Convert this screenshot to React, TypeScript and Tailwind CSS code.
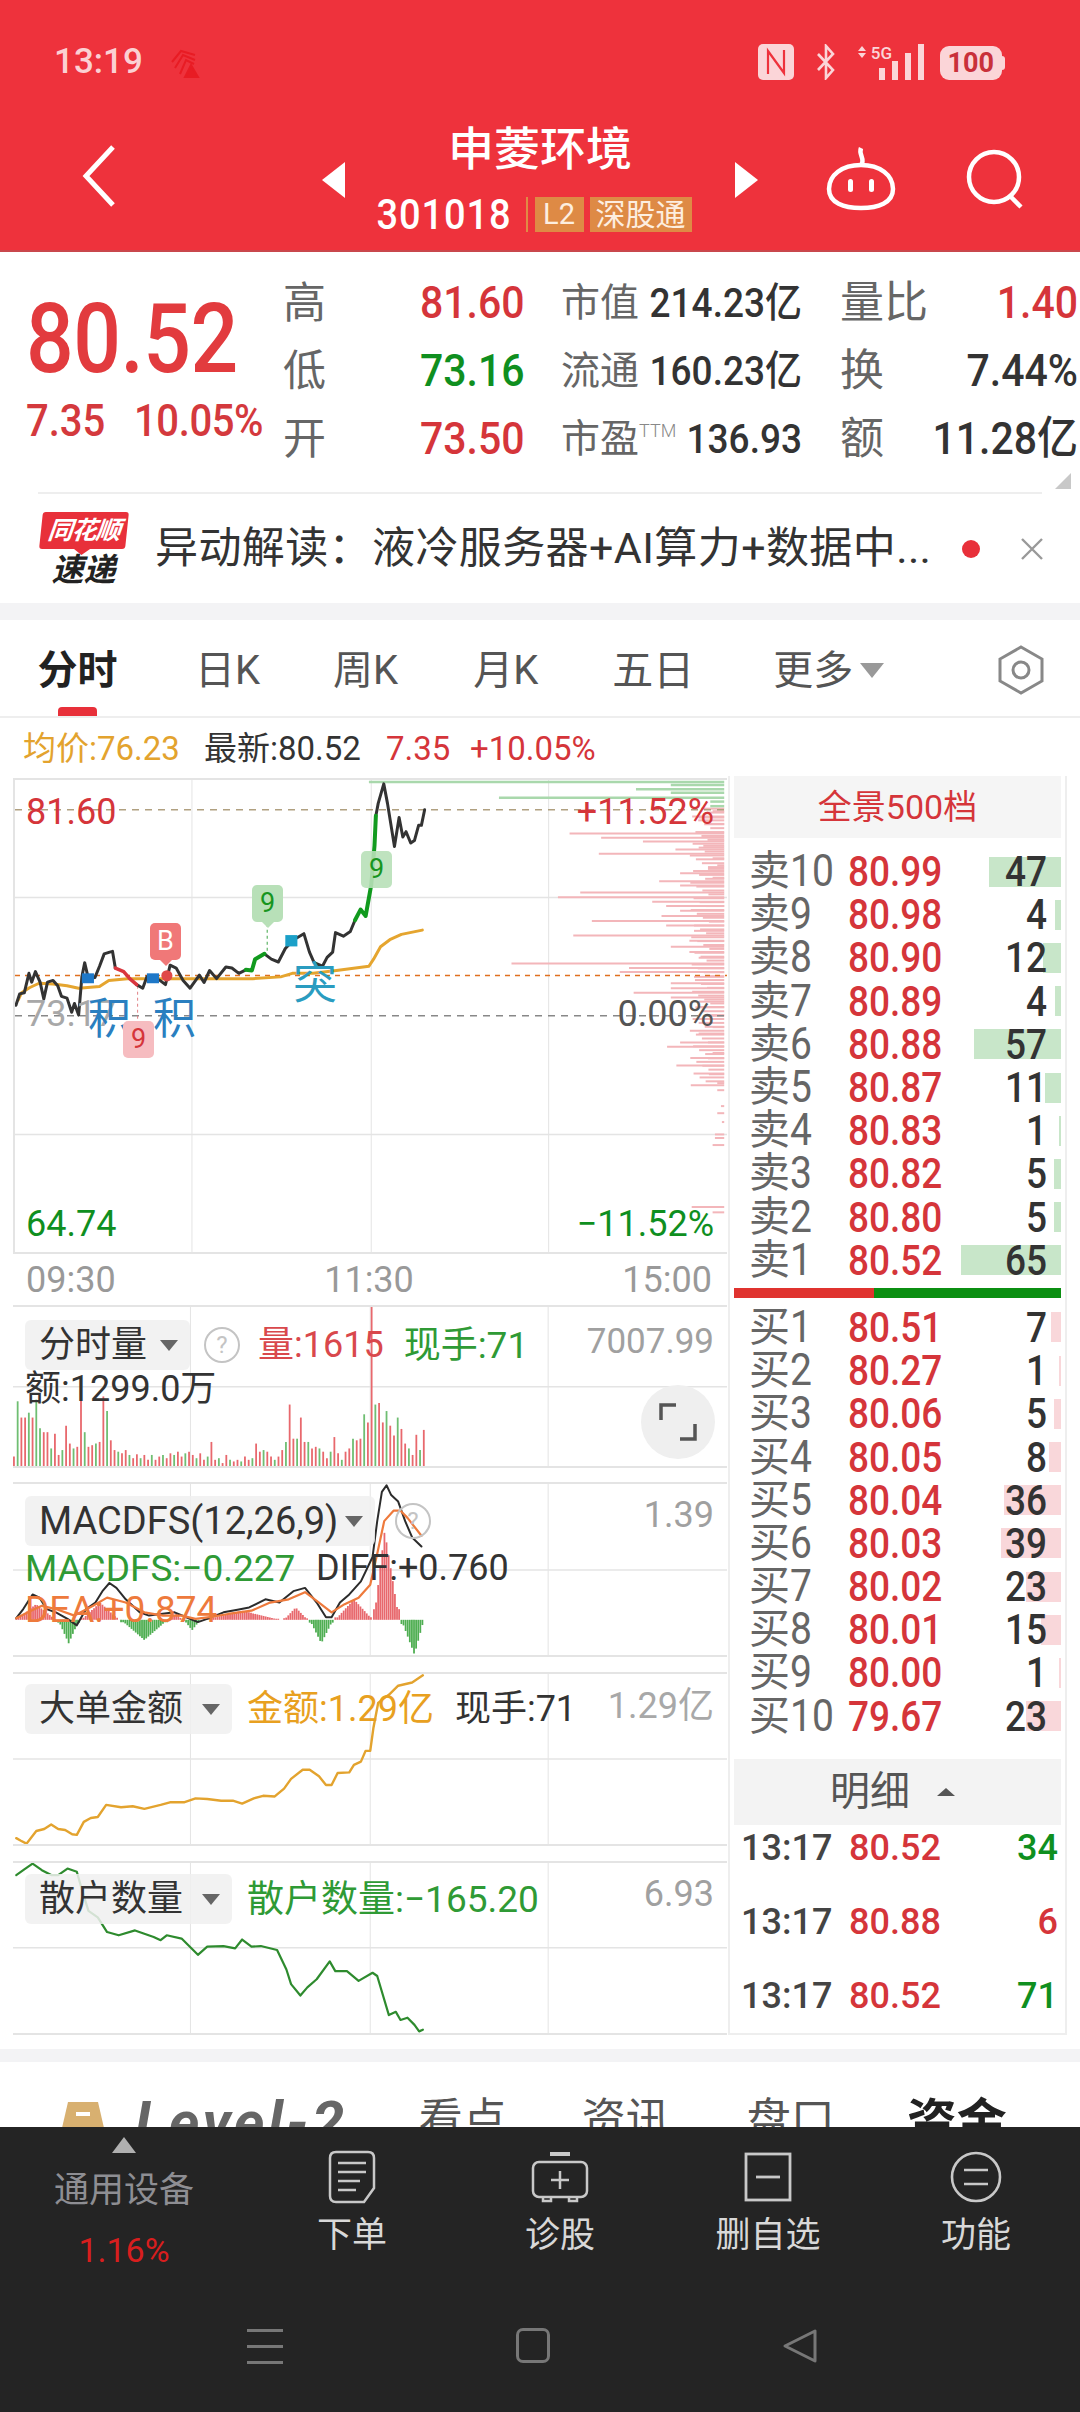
import type { ReactNode } from "react";

const PRICE_BLACK = [
  "30,770 38,738 48,735 58,680 64,705 72,675 82,705 90,752 98,705 110,700 120,715 128,745 140,750 150,790 156,765 165,798 172,690 178,650 186,695 200,692 210,660 220,625 232,620 238,618 244,665",
  "290,712 303,722 312,690 322,690 340,700 352,712 362,657 375,665 390,700 405,722 425,685 435,706 447,672 462,695 482,662 495,665 510,680 525,670",
  "565,625 580,640 595,648 610,610 628,585 650,568 662,620 672,650 690,660 700,635 712,620 718,565 735,575 750,562 760,530",
  "805,235 810,200 822,145 830,200 845,322 855,240 863,295 870,280 880,312 888,305 897,262 903,262 910,218",
];
const PRICE_GREEN = [
  "525,670 538,672 545,640 565,625",
  "760,530 772,500 783,518 795,430 802,320 805,235",
];
const PRICE_RED = "244,665 262,675 275,695 290,712";
const PRICE_AVG =
  "35,755 42,735 60,720 80,708 110,710 140,715 165,722 210,717 230,700 270,695 400,695 540,695 600,690 625,680 670,680 720,672 790,660 800,640 815,605 835,585 860,570 905,558";

const DEPTH_GREEN: [number, number][] = [
  [140, 790], [148, 1440], [160, 1365], [170, 1440], [184, 1070], [195, 1525], [208, 1525],
];
const DEPTH_PINK: [number, number][] = [
  [222, 1530], [240, 1500], [258, 1520], [285, 1222], [297, 1290], [308, 1380], [320, 1510], [330, 1450],
  [342, 1285], [355, 1530], [375, 1540], [385, 1520], [397, 1460], [410, 1530], [420, 1415], [432, 1460],
  [452, 1245], [465, 1197], [478, 1400], [490, 1430], [503, 1460], [518, 1420], [532, 1270], [545, 1430],
  [560, 1490], [573, 1230], [588, 1480], [605, 1440], [620, 1480], [636, 1500], [652, 1097], [665, 1350],
  [676, 1330], [690, 1490], [708, 1440], [722, 1440], [735, 1360], [748, 1440], [760, 1500], [775, 1500],
  [800, 1520], [832, 1530], [850, 1500], [875, 1460], [887, 1432], [905, 1530], [920, 1520], [940, 1452],
  [965, 1522], [990, 1540], [1010, 1540], [1055, 1548], [1075, 1540], [1100, 1550], [1135, 1535], [1145, 1535],
  [1165, 1530], [1340, 1485], [1355, 1530],
];
// the short ticks that keep the right edge of the depth column dense
const DEPTH_FILL: [number, number][] = Array.from({ length: 72 }, (_, i) => {
  const y = 215 + i * 11;
  return [y, 1525 - ((y * 7) % 45)];
});

const VOLUME_TOPS = [
  565, 395, 445, 445, 430, 445, 390, 478, 490, 490, 540, 495, 560, 545, 470, 525, 540, 535, 385, 490, 535, 530, 525, 520,
  380, 425, 515, 545, 550, 555, 545, 560, 570, 558, 570, 560, 575, 560, 575, 565, 560, 570, 555, 560, 550, 565, 555, 550,
  560, 570, 555, 575, 565, 520, 575, 570, 585, 560, 575, 580, 575, 580, 565, 575, 570, 525, 550, 545, 550, 565, 575, 565,
  545, 520, 405, 510, 510, 445, 520, 520, 540, 535, 540, 550, 570, 550, 505, 555, 575, 550, 540, 510, 515, 510, 435, 460,
  105, 405, 400, 460, 425, 470, 500, 445, 480, 525, 540, 560, 498, 545, 483,
];

const MACD_BLACK =
  "35,1048 50,1020 70,975 85,985 100,1020 120,1030 145,1050 165,1070 185,1020 205,1000 220,965 235,940 250,955 270,990 300,1030 320,1040 345,1035 375,1030 400,1045 425,1060 445,1050 480,1030 510,1022 535,1015 570,990 600,1000 630,965 655,955 680,1000 700,1045 712,1045 730,1000 750,975 775,935 800,860 810,750 820,660 830,640 840,670 855,690 870,750 885,800 905,828";
const MACD_ORANGE =
  "35,1048 60,1030 90,1010 120,1020 160,1040 200,1010 230,985 270,1000 310,1030 350,1040 390,1040 420,1050 450,1045 490,1035 540,1025 580,1000 620,990 655,968 685,1000 712,1030 740,1005 770,985 795,945 810,850 825,750 845,718 860,718 875,740 905,795";

// start x, end x, furthest y of each histogram hump
const MACD_HUMPS: [number, number, number][] = [
  [35, 120, 1005], [125, 170, 1125], [175, 255, 1000], [260, 360, 1115], [365, 392, 1035], [395, 430, 1085],
  [440, 600, 1025], [610, 660, 1015], [665, 715, 1125], [720, 800, 990], [803, 857, 780], [862, 910, 1160],
];
const MACD_BASE = 1053;
const MACD_BARS = MACD_HUMPS.flatMap(([start, end, peak]) => {
  const bars: { x: number; y: number }[] = [];
  const mid = peak === 780 ? 826 : peak === 1160 ? 890 : (start + end) / 2;
  for (let x = start; x <= end; x += 4.5) {
    const t = x < mid ? (x - start) / (mid - start || 1) : (end - x) / (end - mid || 1);
    bars.push({ x, y: MACD_BASE + (peak - MACD_BASE) * Math.max(0.12, t) });
  }
  return bars;
});

const BIG_ORDER =
  "35,540 45,548 57,557 78,518 95,512 110,498 125,512 140,515 155,528 165,530 180,490 195,478 210,475 228,438 260,445 285,442 310,450 345,438 365,430 395,430 420,418 445,420 475,425 500,425 520,434 545,418 565,410 590,412 610,388 625,358 650,330 665,330 685,350 700,377 712,377 725,340 750,338 760,315 775,305 785,272 795,272 802,200 812,125 825,110 835,100 855,72 885,62 908,40";
const RETAIL =
  "35,640 50,625 70,605 90,625 110,640 125,640 145,620 165,630 175,680 190,750 210,770 230,815 255,825 290,810 310,820 330,830 345,840 358,825 390,835 425,885 445,860 480,858 505,865 520,838 540,860 560,858 595,870 615,930 625,975 645,1010 660,985 680,960 708,905 720,935 745,935 770,965 800,940 810,950 835,1070 850,1060 860,1085 875,1078 890,1100 900,1120 908,1115";

const SELLS = [
  { n: "10", price: "80.99", qty: "47", bar: 72 },
  { n: "9", price: "80.98", qty: "4", bar: 6 },
  { n: "8", price: "80.90", qty: "12", bar: 18 },
  { n: "7", price: "80.89", qty: "4", bar: 6 },
  { n: "6", price: "80.88", qty: "57", bar: 87 },
  { n: "5", price: "80.87", qty: "11", bar: 16 },
  { n: "4", price: "80.83", qty: "1", bar: 2 },
  { n: "3", price: "80.82", qty: "5", bar: 7 },
  { n: "2", price: "80.80", qty: "5", bar: 7 },
  { n: "1", price: "80.52", qty: "65", bar: 100 },
];
const BUYS = [
  { n: "1", price: "80.51", qty: "7", bar: 10 },
  { n: "2", price: "80.27", qty: "1", bar: 2 },
  { n: "3", price: "80.06", qty: "5", bar: 7 },
  { n: "4", price: "80.05", qty: "8", bar: 12 },
  { n: "5", price: "80.04", qty: "36", bar: 57 },
  { n: "6", price: "80.03", qty: "39", bar: 60 },
  { n: "7", price: "80.02", qty: "23", bar: 35 },
  { n: "8", price: "80.01", qty: "15", bar: 20 },
  { n: "9", price: "80.00", qty: "1", bar: 2 },
  { n: "10", price: "79.67", qty: "23", bar: 35 },
];

const GRID_X = [409, 795, 1177];
const thin = { vectorEffect: "non-scaling-stroke" as const };

function Line({ points, color, width }: { points: string; color: string; width: number }) {
  return (
    <polyline
      points={points}
      fill="none"
      stroke={color}
      strokeWidth={width}
      strokeLinejoin="round"
      strokeLinecap="round"
      {...thin}
    />
  );
}

function Plot({
  view,
  midY,
  children,
}: {
  view: [number, number];
  midY?: number;
  children: ReactNode;
}) {
  const [top, height] = view;
  return (
    <svg
      className="absolute inset-0 h-full w-full"
      viewBox={`28 ${top} 1533 ${height}`}
      preserveAspectRatio="none"
    >
      {GRID_X.map((x) => (
        <line key={x} x1={x} x2={x} y1={top} y2={top + height} stroke="#e4e4e4" strokeWidth={1} {...thin} />
      ))}
      {midY !== undefined && (
        <line x1={28} x2={1561} y1={midY} y2={midY} stroke="#e4e4e4" strokeWidth={1.5} {...thin} />
      )}
      {children}
    </svg>
  );
}

function Pill({ label, width, size = "text-[36px]" }: { label: string; width: string; size?: string }) {
  return (
    <div className={`flex h-[50px] items-center justify-between rounded-md bg-[#f0f0f0]/85 pl-[14px] pr-[12px] ${width}`}>
      <span className={`leading-none text-[#333] ${size}`}>{label}</span>
      <span className="h-0 w-0 border-x-[9px] border-t-[11px] border-x-transparent border-t-[#666]" />
    </div>
  );
}

function Help({ className }: { className: string }) {
  return (
    <span
      className={`flex h-[36px] w-[36px] items-center justify-center rounded-full border-2 border-[#c4c4c4] text-[24px] leading-none text-[#c4c4c4] ${className}`}
    >
      ?
    </span>
  );
}

function Badge({ text, className, tip }: { text: string; className: string; tip?: string }) {
  return (
    <div className={`absolute flex h-[37px] w-[31px] items-center justify-center rounded-[5px] text-[27px] leading-none ${className}`}>
      {text}
      {tip && <span className={`absolute top-full h-0 w-0 border-x-[6px] border-t-[6px] border-x-transparent ${tip}`} />}
    </div>
  );
}

function QuoteRow({
  label,
  value,
  valueColor,
  midLabel,
  midValue,
  sideLabel,
  sideValue,
  sideColor,
}: {
  label: string;
  value: string;
  valueColor: string;
  midLabel: ReactNode;
  midValue: string;
  sideLabel: string;
  sideValue: string;
  sideColor: string;
}) {
  return (
    <div className="flex h-[68px] items-center">
      <span className="w-[137px] text-[43px] leading-none text-[#666]">{label}</span>
      <span className={`inline-block w-[141px] scale-y-110 text-[41px] font-medium leading-none ${valueColor}`}>{value}</span>
      <div className="flex w-[241px] items-center justify-between">
        <span className="text-[39px] leading-none text-[#666]">{midLabel}</span>
        <span className="inline-block scale-y-110 text-[37px] font-medium leading-none text-[#333]">{midValue}</span>
      </div>
      <div className="ml-[38px] flex w-[238px] items-center justify-between">
        <span className="text-[44px] leading-none text-[#666]">{sideLabel}</span>
        <span className={`inline-block scale-y-110 text-[41px] font-medium leading-none ${sideColor}`}>{sideValue}</span>
      </div>
    </div>
  );
}

function BookRow({
  side,
  n,
  price,
  qty,
  bar,
}: {
  side: "卖" | "买";
  n: string;
  price: string;
  qty: string;
  bar: number;
}) {
  return (
    <div className="relative flex h-[43.2px] items-center">
      <div
        className={`absolute right-0 h-[30px] ${side === "卖" ? "bg-[#c8e6c9]" : "bg-[#f9d7da]"}`}
        style={{ width: bar }}
      />
      <span className="relative flex w-[114px] items-center pl-[15px] leading-none text-[#666]">
        <span className="w-[41px] text-[41px]">{side}</span>
        <span className="inline-block scale-y-115 text-[39px]">{n}</span>
      </span>
      <span className="relative inline-block w-[93px] scale-y-115 text-[37px] font-medium leading-none text-[#d5353a]">
        {price}
      </span>
      <span className="relative inline-block flex-1 scale-y-115 pr-[14px] text-right text-[37px] font-medium leading-none text-[#333]">
        {qty}
      </span>
    </div>
  );
}

function Tick({ price, qty, color }: { price: string; qty: string; color: string }) {
  return (
    <div className="flex h-[46px] items-center text-[36px] font-medium leading-none">
      <span className="w-[115px] pl-[7px] text-[#444]">13:17</span>
      <span className="w-[100px] text-[#d5353a]">{price}</span>
      <span className={`flex-1 pr-[3px] text-right ${color}`}>{qty}</span>
    </div>
  );
}

function ToolItem({ icon, label }: { icon: ReactNode; label: string }) {
  return (
    <div className="flex w-[208px] flex-col items-center pt-[23px]">
      <div className="flex h-[53px] items-center justify-center">{icon}</div>
      <span className="mt-[13px] text-[35px] leading-[40px] text-[#d8d8d8]">{label}</span>
    </div>
  );
}

export default function App() {
  return (
    <div className="h-[2412px] w-[1080px] overflow-hidden bg-white font-[Roboto,'Noto_Sans_CJK_SC',sans-serif]">
      {/* red header */}
      <header className="h-[252px] border-b-2 border-[#c9474c] bg-[#ee323c]">
        <div className="flex h-[120px] items-start pt-[44px]">
          <span className="ml-[54px] text-[35px] font-medium leading-[36px] text-[#fbd0d3]">13:19</span>
          <svg className="ml-[26px] mt-[5px]" width="32" height="30" viewBox="0 0 32 30" fill="none" stroke="#e81c24" strokeWidth="2">
            <path d="M3 13 L12 2 L26 6" />
            <path d="M6 19 L14 6 L26 11" />
            <path d="M11 25 L17 11 L25 15" />
            <path d="M22 16 L29 28 L16 28 Z" fill="#e81c24" />
          </svg>
          <svg className="ml-[557px]" width="36" height="36" viewBox="0 0 36 36">
            <rect width="36" height="36" rx="5" fill="#fbd5d8" />
            <path d="M10 30 V7 L26 29 V6" fill="none" stroke="#ee323c" strokeWidth="2.2" />
          </svg>
          <svg className="ml-[22px]" width="20" height="36" viewBox="0 0 20 36" fill="none" stroke="#fbd5d8" strokeWidth="2.6">
            <path d="M2 10 L17 26 L10 34 V2 L17 10 L2 26" />
          </svg>
          <div className="relative ml-[22px] flex h-[36px] w-[68px] items-start">
            <span className="mt-[2px] flex w-[8px] flex-col gap-[2px]">
              <span className="h-0 w-0 border-x-[4px] border-b-[5px] border-x-transparent border-b-[#fbd5d8]" />
              <span className="h-0 w-0 border-x-[4px] border-t-[5px] border-x-transparent border-t-[#fbd5d8]" />
            </span>
            <span className="ml-[5px] text-[17px] font-medium leading-[18px] text-[#fbd5d8]">5G</span>
            <svg className="absolute left-[21px] top-0" width="46" height="36" viewBox="0 0 46 36" fill="#fbd5d8">
              <rect x="0" y="24" width="6" height="12" />
              <rect x="13" y="17" width="6" height="19" />
              <rect x="26" y="9" width="6" height="27" />
              <rect x="39" y="0" width="6" height="36" />
            </svg>
          </div>
          <div className="ml-[14px] mt-[2px] flex items-center">
            <span className="flex h-[34px] w-[62px] items-center justify-center rounded-[9px] bg-[#fbd5d8] text-[27px] font-bold leading-none text-[#c9303a]">
              100
            </span>
            <span className="h-[14px] w-[3px] rounded-r bg-[#fbd5d8]" />
          </div>
        </div>
        <div className="flex h-[130px] items-start">
          <svg className="ml-[82px] mt-[25px]" width="33" height="62" viewBox="0 0 33 62" fill="none" stroke="white" strokeWidth="5">
            <path d="M31 2 L4 31 L31 60" />
          </svg>
          <span className="ml-[207px] mt-[42px] h-0 w-0 border-y-[18px] border-r-[23px] border-y-transparent border-r-white" />
          <div className="flex w-[390px] flex-col items-center">
            <span className="mt-[3px] text-[46px] font-medium leading-[52px] text-white">申菱环境</span>
            <div className="mt-[22px] flex h-[35px] items-center pr-[12px]">
              <span className="inline-block scale-y-110 text-[38px] font-medium leading-none tracking-[0.9px] text-white">301018</span>
              <span className="ml-[14px] h-[35px] w-[2px] bg-[#e08a45]" />
              <span className="ml-[7px] flex h-[35px] w-[49px] items-center justify-center bg-[#de8a45] text-[29px] leading-none text-[#fdeee0]">
                L2
              </span>
              <span className="ml-[6px] flex h-[35px] w-[102px] items-center justify-center bg-[#de8a45] text-[30px] leading-none text-[#fdeee0]">
                深股通
              </span>
            </div>
          </div>
          <span className="mt-[42px] h-0 w-0 border-y-[18px] border-l-[23px] border-y-transparent border-l-white" />
          <svg className="ml-[68px] mt-[25px]" width="70" height="66" viewBox="0 0 70 66" fill="none" stroke="white" strokeWidth="4.5">
            <path d="M35 20 C40 14 32 10 35 3" />
            <path d="M35 20 C16 20 3 30 3 44 C3 58 18 63 35 63 C52 63 67 58 67 44 C67 30 54 20 35 20 Z" />
            <rect x="22" y="34" width="5" height="13" rx="2.5" fill="white" stroke="none" />
            <rect x="43" y="34" width="5" height="13" rx="2.5" fill="white" stroke="none" />
          </svg>
          <svg className="ml-[70px] mt-[29px]" width="60" height="60" viewBox="0 0 60 60" fill="none" stroke="white" strokeWidth="4.5">
            <circle cx="28" cy="28" r="25" />
            <path d="M44 47 L55 58" />
          </svg>
        </div>
      </header>

      {/* quote */}
      <section className="flex h-[240px] items-start">
        <div className="w-[283px] pl-[26px]">
          <div className="mt-[38px] inline-block scale-y-115 text-[84px] font-medium leading-[100px] tracking-[-0.5px] text-[#e23b3e]">
            80.52
          </div>
          <div className="mt-[12px] flex items-center text-[40px] font-medium leading-[40px] text-[#d4393d]">
            <span className="inline-block w-[108px] scale-y-110">7.35</span>
            <span className="inline-block scale-y-110 tracking-[-0.4px]">10.05%</span>
          </div>
        </div>
        <div className="pt-[17px]">
          <QuoteRow label="高" value="81.60" valueColor="text-[#d5353a]" midLabel="市值" midValue="214.23亿" sideLabel="量比" sideValue="1.40" sideColor="text-[#d5353a]" />
          <QuoteRow label="低" value="73.16" valueColor="text-[#0f8f1f]" midLabel="流通" midValue="160.23亿" sideLabel="换" sideValue="7.44%" sideColor="text-[#333]" />
          <QuoteRow
            label="开"
            value="73.50"
            valueColor="text-[#d5353a]"
            midLabel={
              <span className="flex items-start">
                市盈<span className="mt-[2px] text-[18px] font-light text-[#888]">TTM</span>
              </span>
            }
            midValue="136.93"
            sideLabel="额"
            sideValue="11.28亿"
            sideColor="text-[#333]"
          />
          <span className="ml-[772px] block h-0 w-0 border-b-[16px] border-l-[16px] border-b-[#c8c8c8] border-l-transparent" />
        </div>
      </section>

      {/* news ticker */}
      <section className="mx-[38px] flex h-[111px] items-center border-t-2 border-[#eeeeee]">
        <div className="ml-[2px] flex w-[87px] flex-col items-center">
          <div className="relative flex h-[37px] w-[86px] -skew-x-6 items-center justify-center rounded-[3px] bg-[#e8303a]">
            <span className="text-[25px] font-bold italic leading-none tracking-[-1px] text-white">同花顺</span>
            <span className="absolute top-full h-0 w-0 border-x-[8px] border-t-[6px] border-x-transparent border-t-[#e8303a]" />
          </div>
          <span className="mt-[5px] text-[32px] font-bold italic leading-[32px] text-[#222]">速递</span>
        </div>
        <span className="ml-[28px] whitespace-nowrap text-[43px] leading-none tracking-[0.4px] text-[#333]">
          异动解读：液冷服务器+AI算力+数据中...
        </span>
        <span className="ml-auto mr-[40px] h-[18px] w-[18px] shrink-0 rounded-full bg-[#e8303a]" />
        <svg className="mr-[-2px]" width="24" height="24" viewBox="0 0 24 24" stroke="#999" strokeWidth="2.4">
          <path d="M2 2 L22 22 M22 2 L2 22" />
        </svg>
      </section>

      <div className="h-[17px] bg-[#f3f3f5]" />

      {/* period tabs */}
      <nav className="flex h-[98px] items-start border-b-2 border-[#eeeeee] pt-[29px] text-[40px] leading-[44px] text-[#555]">
        <div className="ml-[37px] flex w-[81px] flex-col items-center">
          <span className="font-bold text-[#222]">分时</span>
          <span className="mt-[14px] h-[9px] w-[39px] rounded-t-sm bg-[#e8303a]" />
        </div>
        <span className="ml-[77px]">日K</span>
        <span className="ml-[73px]">周K</span>
        <span className="ml-[75px]">月K</span>
        <span className="ml-[74px] text-[41px]">五日</span>
        <span className="ml-[79px]">更多</span>
        <span className="ml-[7px] mt-[14px] h-0 w-0 border-x-[12px] border-t-[15px] border-x-transparent border-t-[#999]" />
        <svg className="ml-[113px] mt-[-4px]" width="48" height="50" viewBox="0 0 46 50" fill="none" stroke="#888" strokeWidth="3">
          <path d="M23 2 L44 14 V36 L23 48 L2 36 V14 Z" />
          <circle cx="23" cy="25" r="8" />
        </svg>
      </nav>

      {/* last price line */}
      <div className="flex h-[58px] items-center pl-[23px] pt-[2px] text-[33px] leading-none">
        <span className="inline-block w-[181px] text-[#e3a32e]">均价:76.23</span>
        <span className="inline-block w-[182px] text-[#333]">最新:80.52</span>
        <span className="inline-block w-[84px] text-[#d5353a]">7.35</span>
        <span className="text-[#d5353a]">+10.05%</span>
      </div>

      <main className="flex h-[1259px] items-start">
        <div className="ml-[13px] mt-[2px] w-[714px]">
          {/* intraday chart */}
          <div className="relative h-[476px] border-y-2 border-l-2 border-[#e4e4e4]">
            <Plot view={[134, 1333]}>
              {[466, 1135].map((y) => (
                <line key={y} x1={28} x2={1561} y1={y} y2={y} stroke="#e4e4e4" strokeWidth={1.5} {...thin} />
              ))}
              {DEPTH_GREEN.map(([y, x]) => (
                <line key={y} x1={x} x2={1555} y1={y} y2={y} stroke="#a9d8ac" strokeWidth={2.5} {...thin} />
              ))}
              {DEPTH_FILL.map(([y, x]) => (
                <line key={y} x1={x} x2={1555} y1={y} y2={y} stroke="#f3b6ba" strokeWidth={2} {...thin} />
              ))}
              {DEPTH_PINK.map(([y, x]) => (
                <line key={y} x1={x} x2={1555} y1={y} y2={y} stroke="#f3b6ba" strokeWidth={2} {...thin} />
              ))}
              <line x1={28} x2={1561} y1={218} y2={218} stroke="#b0a080" strokeWidth={1.5} strokeDasharray="7 6" {...thin} />
              <line x1={28} x2={1561} y1={800} y2={800} stroke="#888" strokeWidth={1.5} strokeDasharray="7 6" {...thin} />
              <line x1={28} x2={1561} y1={686} y2={686} stroke="#e07020" strokeWidth={1.5} strokeDasharray="5 5" {...thin} />
              <line x1={292} x2={292} y1={715} y2={810} stroke="#e08085" strokeWidth={1} strokeDasharray="3 3" {...thin} />
              <line x1={571} x2={571} y1={540} y2={625} stroke="#3fa648" strokeWidth={1} strokeDasharray="3 3" {...thin} />
              <Line points={PRICE_AVG} color="#e5a52f" width={3} />
              {PRICE_BLACK.map((points) => (
                <Line key={points} points={points} color="#333" width={3} />
              ))}
              {PRICE_GREEN.map((points) => (
                <Line key={points} points={points} color="#119a1e" width={4} />
              ))}
              <Line points={PRICE_RED} color="#d9363e" width={3.5} />
              <rect x={172} y={680} width={26} height={28} fill="#1e78c8" />
              <rect x={312} y={680} width={26} height={28} fill="#1e78c8" />
              <rect x={610} y={572} width={26} height={32} fill="#1ba0c8" />
              <ellipse cx={355} cy={687} rx={12} ry={16} fill="#e04848" />
            </Plot>
            <span className="absolute left-[11px] top-[14px] text-[36px] leading-none text-[#d5353a]">81.60</span>
            <span className="absolute right-[13px] top-[14px] text-[36px] leading-none text-[#d5353a]">+11.52%</span>
            <span className="absolute left-[11px] top-[216px] text-[36px] leading-none text-[#a8a8a8]">73.17</span>
            <span className="absolute right-[13px] top-[216px] text-[36px] leading-none text-[#555]">0.00%</span>
            <span className="absolute left-[11px] bottom-[10px] text-[36px] leading-none text-[#0f8f1f]">64.74</span>
            <span className="absolute right-[13px] bottom-[10px] text-[36px] leading-none text-[#0f8f1f]">−11.52%</span>
            <span className="absolute left-[73px] top-[218px] text-[43px] leading-none text-[#2a7fc0]">积</span>
            <span className="absolute left-[138px] top-[218px] text-[43px] leading-none text-[#2a7fc0]">积</span>
            <span className="absolute left-[278px] top-[182px] text-[44px] leading-none text-[#2a9cc0]">突</span>
            <Badge text="B" className="left-[135px] top-[143px] bg-[#f07878] text-white" tip="border-t-[#f07878]" />
            <Badge text="9" className="left-[108px] top-[241px] bg-[#f6bcc0] text-[#d5353a]" />
            <Badge text="9" className="left-[237px] top-[105px] bg-[#b8e0b8] text-[#17951f]" tip="border-t-[#b8e0b8]" />
            <Badge text="9" className="left-[346px] top-[71px] bg-[#b8e0b8]/90 text-[#17951f]" />
          </div>
          <div className="flex h-[51px] items-center justify-between pl-[13px] pr-[15px] text-[36px] leading-none text-[#999]">
            <span>09:30</span>
            <span>11:30</span>
            <span>15:00</span>
          </div>

          {/* volume */}
          <div className="relative h-[163px] border-y-2 border-[#e4e4e4]">
            <Plot view={[105, 489]} midY={350}>
              {VOLUME_TOPS.map((top, i) => (
                <line
                  key={i}
                  x1={30 + i * 8}
                  x2={30 + i * 8}
                  y1={top}
                  y2={594}
                  stroke={i % 3 === 1 || i === 6 || i === 100 || i === 103 ? "#6fbe72" : "#e8686d"}
                  strokeWidth={1.8}
                  {...thin}
                />
              ))}
            </Plot>
            <div className="absolute left-[12px] top-[13px] flex items-center">
              <Pill label="分时量" width="w-[165px]" />
              <Help className="ml-[14px]" />
              <span className="ml-[18px] text-[36px] leading-none text-[#d9484c]">量:1615</span>
              <span className="ml-[20px] text-[37px] leading-none text-[#2f9a35]">现手:71</span>
            </div>
            <span className="absolute right-[13px] top-[17px] text-[35px] leading-none text-[#a0a0a0]">7007.99</span>
            <span className="absolute left-[12px] top-[64px] text-[36px] leading-none text-[#333]">额:1299.0万</span>
            <div className="absolute right-[12px] top-[78px] flex h-[74px] w-[74px] items-center justify-center rounded-full bg-[#efefef]">
              <svg width="40" height="40" viewBox="0 0 40 40" fill="none" stroke="#555" strokeWidth="3.5">
                <path d="M3 18 V3 H18" />
                <path d="M37 22 V37 H22" />
              </svg>
            </div>
          </div>

          {/* MACD */}
          <div className="relative mt-[14px] h-[175px] border-y-2 border-[#e4e4e4]">
            <Plot view={[636, 525]} midY={900}>
              {MACD_BARS.map(({ x, y }, i) => (
                <line key={i} x1={x} x2={x} y1={MACD_BASE} y2={y} stroke={y < MACD_BASE ? "#e8686d" : "#4fae52"} strokeWidth={1.8} {...thin} />
              ))}
              <Line points={MACD_BLACK} color="#2c2c2c" width={2} />
              <Line points={MACD_ORANGE} color="#ee7a3c" width={2.2} />
            </Plot>
            <div className="absolute left-[12px] top-[12px] flex items-center">
              <Pill label="MACDFS(12,26,9)" width="w-[350px]" size="text-[38px]" />
              <Help className="ml-[20px]" />
            </div>
            <span className="absolute right-[13px] top-[13px] text-[36px] leading-none text-[#a0a0a0]">1.39</span>
            <span className="absolute left-[12px] top-[66px] text-[37px] leading-none text-[#2f9a35]">MACDFS:−0.227</span>
            <span className="absolute left-[303px] top-[66px] text-[36px] leading-none text-[#333]">DIFF:+0.760</span>
            <span className="absolute left-[12px] top-[107px] text-[37px] leading-none text-[#ee7a3c]">DEA:+0.874</span>
          </div>

          {/* big orders */}
          <div className="relative mt-[15px] h-[174px] border-y-2 border-[#e4e4e4]">
            <Plot view={[36, 522]} midY={297}>
              <Line points={BIG_ORDER} color="#e3a32e" width={2.4} />
            </Plot>
            <div className="absolute left-[12px] top-[10px] flex items-center">
              <Pill label="大单金额" width="w-[207px]" />
              <span className="ml-[15px] text-[36px] leading-none text-[#e8a020]">金额:1.29亿</span>
              <span className="ml-[21px] text-[36px] leading-none text-[#333]">现手:71</span>
            </div>
            <span className="absolute right-[13px] top-[14px] text-[36px] leading-none text-[#a8a8a8]">1.29亿</span>
          </div>

          {/* retail count */}
          <div className="relative mt-[15px] h-[174px] border-y-2 border-[#e4e4e4]">
            <Plot view={[603, 522]} midY={863}>
              <Line points={RETAIL} color="#2e8b2e" width={2.2} />
            </Plot>
            <div className="absolute left-[12px] top-[11px] flex items-center">
              <Pill label="散户数量" width="w-[207px]" />
              <span className="ml-[15px] text-[37px] leading-none text-[#2f9a35]">散户数量:−165.20</span>
            </div>
            <span className="absolute right-[13px] top-[13px] text-[36px] leading-none text-[#a0a0a0]">6.93</span>
          </div>
        </div>

        {/* order book */}
        <aside className="ml-[1px] h-[1259px] w-[339px] border-x-2 border-b-2 border-[#eeeeee] px-[4px]">
          <div className="flex h-[62px] items-center justify-center bg-[#f5f5f5] text-[34px] leading-none text-[#d5353a]">
            全景500档
          </div>
          <div className="mt-[12px]">
            {SELLS.map((row) => (
              <BookRow key={row.n} side="卖" {...row} />
            ))}
          </div>
          <div className="mt-[6px] flex h-[10px]">
            <span className="w-[140px] bg-[#e0332f]" />
            <span className="flex-1 bg-[#0b8f12]" />
          </div>
          <div className="mt-[8px]">
            {BUYS.map((row) => (
              <BookRow key={row.n} side="买" {...row} />
            ))}
          </div>
          <div className="mt-[21px] flex h-[66px] items-center justify-center bg-[#f3f3f3] pr-[10px]">
            <span className="text-[40px] leading-none text-[#555]">明细</span>
            <span className="ml-[27px] h-0 w-0 border-x-[9px] border-b-[8px] border-x-transparent border-b-[#555]" />
          </div>
          <div className="flex flex-col gap-[28px]">
            <Tick price="80.52" qty="34" color="text-[#0f8f1f]" />
            <Tick price="80.88" qty="6" color="text-[#d5353a]" />
            <Tick price="80.52" qty="71" color="text-[#0f8f1f]" />
          </div>
        </aside>
      </main>

      <div className="mt-[14px] h-[13px] bg-[#f3f3f5]" />

      {/* tabs cut off by the dock */}
      <div className="flex h-[65px] items-start overflow-hidden pt-[36px] text-[44px] leading-none text-[#555]">
        <svg className="ml-[60px] mt-[2px]" width="46" height="44" viewBox="0 0 46 44">
          <path d="M8 2 H38 L44 28 Q44 42 30 42 H16 Q2 42 2 28 Z" fill="#d8b070" />
          <rect x="16" y="12" width="14" height="4" fill="white" />
        </svg>
        <span className="ml-[29px] mt-[-5px] text-[58px] font-bold italic leading-none tracking-[3.5px] text-[#666]">Level-2</span>
        <span className="ml-[71px]">看点</span>
        <span className="ml-[75px]">资讯</span>
        <span className="ml-[77px]">盘口</span>
        <span className="ml-[72px] text-[50px] font-bold text-[#222]">资金</span>
      </div>

      {/* dark dock */}
      <footer className="h-[285px] bg-[#242424]">
        <div className="flex h-[165px] items-start">
          <div className="flex w-[248px] flex-col items-center pt-[10px]">
            <span className="h-0 w-0 border-x-[12px] border-b-[16px] border-x-transparent border-b-[#b0b0b0]" />
            <span className="mt-[20px] text-[35px] leading-[36px] text-[#8e8e93]">通用设备</span>
            <span className="mt-[23px] text-[34px] leading-[36px] text-[#d81e1e]">1.16%</span>
          </div>
          <ToolItem
            label="下单"
            icon={
              <svg width="48" height="54" viewBox="0 0 48 54" fill="none" stroke="#c8c8c8" strokeWidth="2.5">
                <path d="M8 2 H40 Q46 2 46 8 V38 L36 52 H8 Q2 52 2 46 V8 Q2 2 8 2 Z" />
                <path d="M10 13 H38 M10 22 H38 M10 31 H32 M10 40 H28" />
              </svg>
            }
          />
          <ToolItem
            label="诊股"
            icon={
              <svg width="58" height="52" viewBox="0 0 58 52" fill="none" stroke="#c8c8c8" strokeWidth="2.5">
                <path d="M19 3 H39" strokeWidth="4" />
                <rect x="2" y="11" width="54" height="35" rx="6" />
                <path d="M29 20 V38 M20 29 H38" />
                <path d="M12 46 V50 H20 V46 M38 46 V50 H46 V46" />
              </svg>
            }
          />
          <ToolItem
            label="删自选"
            icon={
              <svg width="48" height="50" viewBox="0 0 48 50" fill="none" stroke="#c8c8c8" strokeWidth="2.8">
                <rect x="2" y="2" width="44" height="46" />
                <path d="M12 25 H36" />
              </svg>
            }
          />
          <ToolItem
            label="功能"
            icon={
              <svg width="52" height="52" viewBox="0 0 52 52" fill="none" stroke="#c8c8c8" strokeWidth="2.6">
                <circle cx="26" cy="26" r="24" />
                <path d="M14 19 H38 M14 33 H38" />
              </svg>
            }
          />
        </div>
        {/* system navigation */}
        <div className="flex h-[120px] items-start pt-[36px]">
          <div className="ml-[247px] flex w-[36px] flex-col gap-[13px] pt-[1px]">
            <span className="h-[3px] bg-[#777]" />
            <span className="h-[3px] bg-[#777]" />
            <span className="h-[3px] bg-[#777]" />
          </div>
          <span className="ml-[233px] h-[35px] w-[34px] rounded-[7px] border-[3px] border-[#777]" />
          <svg className="ml-[232px]" width="36" height="36" viewBox="0 0 36 36" fill="none" stroke="#777" strokeWidth="3" strokeLinejoin="round">
            <path d="M33 3 V33 L3 18 Z" />
          </svg>
        </div>
      </footer>
    </div>
  );
}
